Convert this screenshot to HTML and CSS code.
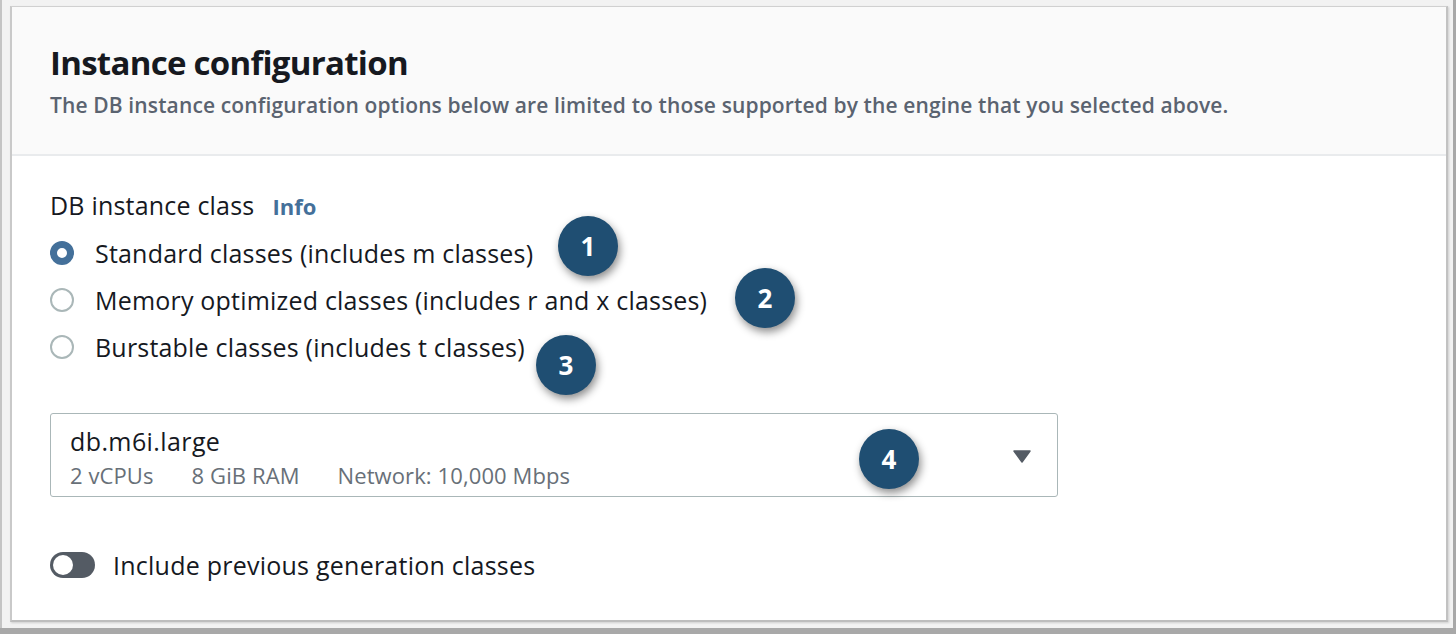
FILE: index.html
```html
<!DOCTYPE html>
<html>
<head>
<meta charset="utf-8">
<link rel="stylesheet" href="styles.css">
</head>
<body>
<div class="screen">
  <div class="panel">
    <div class="header">
      <h2 class="title">Instance configuration</h2>
      <p class="subtitle">The DB instance configuration options below are limited to those supported by the engine that you selected above.</p>
    </div>
    <div class="body">
      <div class="field-label">DB instance class <span class="info">Info</span></div>
      <div class="radios">
        <div class="radio-row"><span class="radio checked"></span><span class="radio-label">Standard classes (includes m classes)</span></div>
        <div class="radio-row"><span class="radio"></span><span class="radio-label">Memory optimized classes (includes r and x classes)</span></div>
        <div class="radio-row"><span class="radio"></span><span class="radio-label">Burstable classes (includes t classes)</span></div>
      </div>
      <div class="select">
        <div class="select-text">
          <div class="select-main">db.m6i.large</div>
          <div class="select-tags"><span>2 vCPUs</span><span>8 GiB RAM</span><span>Network: 10,000 Mbps</span></div>
        </div>
        <svg class="caret" width="18" height="13" viewBox="0 0 18 13"><path d="M1 1 H17 L9 12 Z" fill="#545b64" stroke="#545b64" stroke-width="1.5" stroke-linejoin="round"/></svg>
      </div>
      <div class="toggle-row">
        <span class="toggle"><span class="knob"></span></span>
        <span class="toggle-label">Include previous generation classes</span>
      </div>
    </div>
    <span class="badge b1">1</span>
    <span class="badge b2">2</span>
    <span class="badge b3">3</span>
    <span class="badge b4">4</span>
  </div>
</div>
</body>
</html>
```

FILE: styles.css
```css
* { box-sizing: border-box; }
html, body { margin: 0; padding: 0; }
body {
  width: 1456px;
  height: 634px;
  overflow: hidden;
  background: #a8a8a8;
  font-family: "Open Sans", "Noto Sans", sans-serif;
}
.screen {
  width: 1453px;
  height: 628px;
  background: #f2f2f2;
  border-left: 2px solid #c4c4c4;
  padding: 6px 5px 6px 8px;
}
.panel {
  position: relative;
  width: 1438px;
  height: 616px;
  background: #ffffff;
  border: 1px solid #d0d0d0;
  border-left: 2px solid #c9c9c9;
  border-right: 2px solid #c2c2c2;
  border-bottom: 2px solid #bdbdbd;
  box-shadow: 1px 1px 2px rgba(0,0,0,0.15);
}
.header {
  height: 149px;
  background: #fafafa;
  border-bottom: 2px solid #e9ebed;
  padding: 36px 0 0 38px;
}
.title {
  margin: 0;
  font-size: 33px;
  line-height: 40px;
  font-weight: 700;
  color: #16191f;
  letter-spacing: -0.72px;
}
.subtitle {
  margin: 8px 0 0 0;
  font-size: 21px;
  line-height: 28px;
  color: #5a6370;
  font-weight: 600;
  letter-spacing: 0.13px;
  white-space: nowrap;
}
.body {
  padding: 34px 0 0 38px;
}
.field-label {
  font-size: 25px;
  line-height: 30px;
  color: #16191f;
  letter-spacing: 0.2px;
  display: flex;
  align-items: baseline;
}
.info {
  margin-left: 18px;
  font-size: 22px;
  font-weight: 700;
  color: #44709a;
  letter-spacing: 0;
}
.radios {
  display: flex;
  flex-direction: column;
  gap: 17px;
  margin-top: 17px;
}
.radio-row {
  display: flex;
  align-items: center;
  height: 30px;
}
.radio {
  width: 24px;
  height: 24px;
  border-radius: 50%;
  border: 2px solid #aab7b8;
  background: #fff;
  flex: none;
}
.radio.checked {
  border: 7px solid #44709a;
  background: #fff;
}
.radio-label {
  margin-left: 21px;
  font-size: 25px;
  line-height: 30px;
  letter-spacing: 0.2px;
  color: #16191f;
}
.select {
  margin-top: 51px;
  width: 1008px;
  height: 84px;
  border: 1.5px solid #aab7b8;
  border-radius: 3px;
  display: flex;
  align-items: center;
  justify-content: space-between;
  padding: 0 26px 0 19px;
}
.select-text { margin-top: 6px; }
.select-main {
  font-size: 25px;
  line-height: 30px;
  letter-spacing: 0.4px;
  color: #16191f;
}
.select-tags {
  display: flex;
  gap: 38px;
  font-size: 22px;
  line-height: 30px;
  letter-spacing: 0.1px;
  color: #687078;
  margin-top: 4px;
}
.caret { display: block; margin-top: 2px; }
.toggle-row {
  display: flex;
  align-items: center;
  height: 30px;
  margin-top: 53px;
}
.toggle {
  width: 45px;
  height: 26px;
  border-radius: 13px;
  background: #545b64;
  position: relative;
  flex: none;
}
.knob {
  position: absolute;
  left: 3px;
  top: 3px;
  width: 20px;
  height: 20px;
  border-radius: 50%;
  background: #fff;
}
.toggle-label {
  margin-left: 18px;
  font-size: 25px;
  line-height: 30px;
  letter-spacing: 0.24px;
  color: #16191f;
}
.badge {
  position: absolute;
  width: 60px;
  height: 60px;
  border-radius: 50%;
  background: #1f4e72;
  color: #fff;
  font-weight: 700;
  font-size: 26px;
  display: flex;
  align-items: center;
  justify-content: center;
  box-shadow: 2px 4px 8px rgba(0,0,0,0.45);
}
.b1 { left: 546px; top: 209px; }
.b2 { left: 723px; top: 261px; }
.b3 { left: 524px; top: 328px; }
.b4 { left: 847px; top: 422px; }
```
